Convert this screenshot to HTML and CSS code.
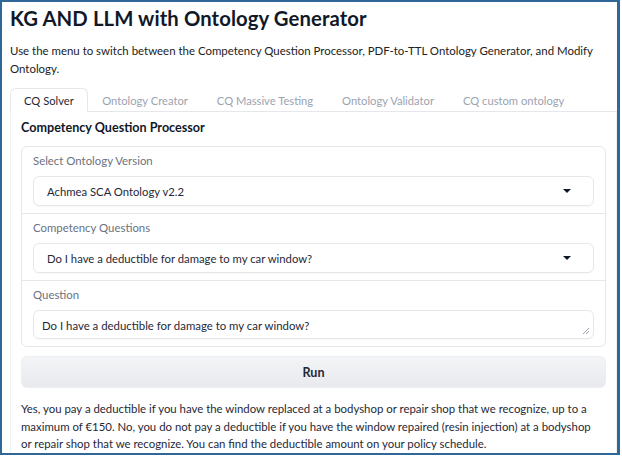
FILE: index.html
```html
<!DOCTYPE html>
<html>
<head>
<meta charset="utf-8">
<link rel="stylesheet" href="styles.css">
</head>
<body>
<div class="frame">
  <div class="page">
    <h1 class="title">KG AND LLM with Ontology Generator</h1>
    <p class="intro">Use the menu to switch between the Competency Question Processor, PDF-to-TTL Ontology Generator, and Modify Ontology.</p>
    <div class="tabs">
      <div class="tab active">CQ Solver</div>
      <div class="tab">Ontology Creator</div>
      <div class="tab">CQ Massive Testing</div>
      <div class="tab">Ontology Validator</div>
      <div class="tab">CQ custom ontology</div>
      <div class="tab-fill"></div>
    </div>
    <div class="panel">
      <h2 class="section">Competency Question Processor</h2>
      <div class="group">
        <div class="field">
          <div class="label">Select Ontology Version</div>
          <div class="select"><span>Achmea SCA Ontology v2.2</span><span class="caret"></span></div>
        </div>
        <div class="field">
          <div class="label">Competency Questions</div>
          <div class="select"><span>Do I have a deductible for damage to my car window?</span><span class="caret"></span></div>
        </div>
        <div class="field">
          <div class="label">Question</div>
          <div class="textarea">Do I have a deductible for damage to my car window?
            <svg class="grip" width="8" height="8" viewBox="0 0 8 8"><path d="M1 7 L7 1 M4 7 L7 4" stroke="#9ca3af" stroke-width="1"/></svg>
          </div>
        </div>
      </div>
      <div class="run">Run</div>
      <p class="answer">Yes, you pay a deductible if you have the window replaced at a bodyshop or repair shop that we recognize, up to a maximum of €150. No, you do not pay a deductible if you have the window repaired (resin injection) at a bodyshop or repair shop that we recognize. You can find the deductible amount on your policy schedule.</p>
    </div>
  </div>
</div>
</body>
</html>
```

FILE: styles.css
```css
* { box-sizing: border-box; }
html, body { margin: 0; padding: 0; background: #fff; }
body {
  font-family: "Lato", "Source Sans Pro", "Noto Sans", sans-serif;
  color: #1f2937;
  width: 622px;
  height: 458px;
  overflow: hidden;
}
.frame {
  width: 620px;
  height: 455px;
  border: 2.5px solid #2f6798;
  border-right-width: 3px;
  overflow: hidden;
}
.page {
  padding: 3px 0 0 8px;
  height: 100%;
  overflow: hidden;
}
.title {
  margin: 0;
  font-size: 20.3px;
  font-weight: 700;
  line-height: 26px;
  color: #111827;
  letter-spacing: 0.1px;
}
.intro {
  margin: 11px 0 0;
  font-size: 11.45px;
  line-height: 18px;
  color: #222;
}
.tabs {
  display: flex;
  margin-top: 10px;
  height: 24px;
}
.tab {
  font-size: 11.2px;
  color: #9ca3af;
  padding: 0 14.5px;
  line-height: 23px;
  border-bottom: 1px solid #e5e7eb;
  border-top: 1px solid transparent;
}
.tab.active {
  color: #1f2937;
  border: 1px solid #e5e7eb;
  border-bottom-color: #fff;
  border-radius: 6px 6px 0 0;
  padding: 0 13px;
}
.tab-fill { flex: 1; border-bottom: 1px solid #e5e7eb; }
.panel {
  border: 1px solid #f0f1f3;
  border-top: none;
  padding: 8px 10px 0 10px;
  height: 400px;
  width: 607px;
}
.section {
  margin: 0 0 10px;
  font-size: 12.6px;
  font-weight: 700;
  line-height: 16px;
  color: #111827;
}
.group {
  border: 1px solid #e5e7eb;
  border-radius: 6px;
}
.field {
  padding: 6px 11px 7px 11px;
  border-top: 1px solid #e5e7eb;
}
.field:first-child { border-top: none; }
.label {
  font-size: 11.4px;
  color: #6b7280;
  line-height: 16px;
  margin-bottom: 7px;
}
.select {
  height: 30px;
  border: 1px solid #e5e7eb;
  border-radius: 6px;
  display: flex;
  align-items: center;
  justify-content: space-between;
  padding: 0 22px 0 13px;
  font-size: 11.3px;
  color: #1f2937;
  box-shadow: 0 1px 1px rgba(0,0,0,0.03);
}
.caret {
  width: 0; height: 0;
  border-left: 4px solid transparent;
  border-right: 4px solid transparent;
  border-top: 4px solid #111827;
}
.textarea {
  position: relative;
  height: 29px;
  border: 1px solid #e5e7eb;
  border-radius: 6px;
  padding: 0 8px;
  line-height: 29px;
  font-size: 11.4px;
  color: #1f2937;
  box-shadow: 0 1px 1px rgba(0,0,0,0.03);
}
.grip { position: absolute; right: 3px; bottom: 3px; }
.run {
  margin-top: 9px;
  height: 32px;
  border-radius: 6px;
  background: linear-gradient(#f3f4f6, #e9eaee);
  border: 1px solid #eceef1;
  display: flex;
  align-items: center;
  justify-content: center;
  font-size: 12.6px;
  font-weight: 700;
  color: #1f2937;
}
.answer {
  margin: 12px 0 0;
  padding-right: 14px;
  font-size: 11.4px;
  line-height: 17.6px;
  color: #1f2937;
}
```
